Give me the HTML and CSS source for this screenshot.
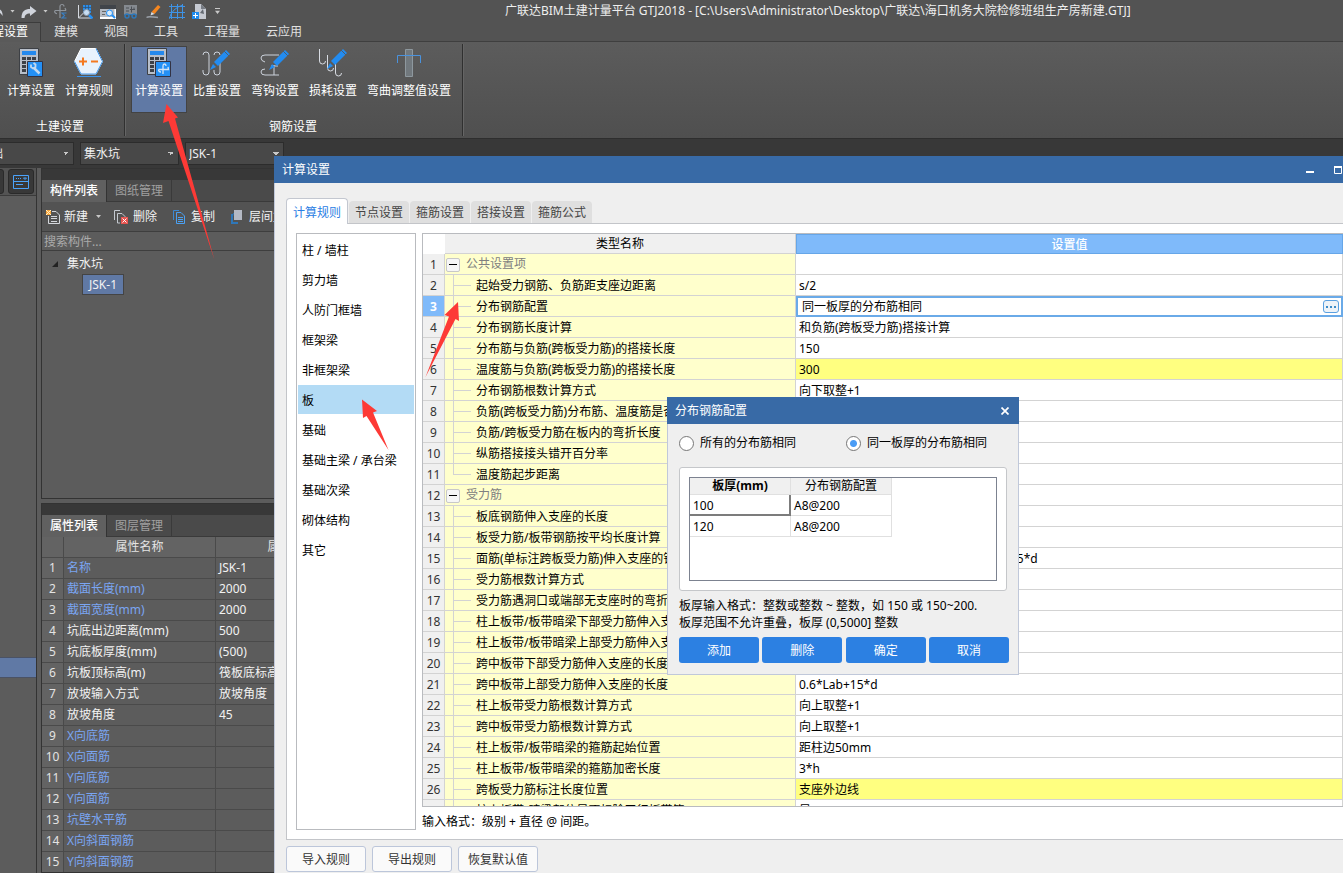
FILE: index.html
```html
<!DOCTYPE html>
<html lang="zh-CN">
<head>
<meta charset="utf-8">
<title>广联达BIM土建计量平台 GTJ2018</title>
<link rel="stylesheet" href="styles.css">
</head>
<body>
<div class="app">
  <header class="titlebar">
    <div class="quick">
      <button class="qbtn qbtn-undo" aria-label="撤销"><svg width="16" height="16" viewBox="0 0 16 16"><path d="M3 7 L8 3 V5.500 C13 5.500 15 9 14.500 13 C13 10 11.500 9 8 9 V11.500 Z" fill="#d0d4dc"/></svg></button>
      <i class="caret"></i>
      <button class="qbtn" aria-label="重做"><svg width="16" height="16" viewBox="0 0 16 16"><path d="M15.500 8L9 3v3C4 6 .5 8 .5 15h3C4 12 5 10.500 9 10.500V13z" fill="#d0d4dc"/></svg></button>
      <i class="caret"></i>
      <button class="qbtn" aria-label="钢筋"><svg width="16" height="16" viewBox="0 0 16 16" fill="none" stroke="#8f959c" stroke-width="1.200"><path d="M6 15V3.500a2 2 0 0 1 4 0M1 7.500h11M1 7.500a2 2 0 0 0 2 3M12 7.500l-1-2.500"/><path d="M12.500 10H8l2.500 2.500L8 15h4.500" stroke="#3a80c4"/></svg></button>
      <button class="qbtn" aria-label="查看钢筋"><svg width="16" height="16" viewBox="0 0 16 16"><path d="M1.500 2v13H14" fill="none" stroke="#d5d9df"/><path d="M1.500 15l5-5" stroke="#d5d9df"/><path d="M6 2h8v8H6z" fill="#2b8de8"/><path d="M8.500 2v8M11.500 2v8M6 4.500h8M6 7.500h8" stroke="#2f4f70" stroke-width=".7"/><circle cx="9.500" cy="9.500" r="3" fill="#c7ddf2" stroke="#8e9aa8"/><path d="M12 12l3.500 3.500" stroke="#2490f5" stroke-width="2.500"/></svg></button>
      <button class="qbtn" aria-label="查找"><svg width="16" height="16" viewBox="0 0 16 16"><path d="M0 2h16v14H0z" fill="#b5bac2"/><path d="M0 2h16v4H0z" fill="#40444a"/><path d="M2 8.500h4M2 11.500h3" stroke="#666"/><path d="M0 15h16M15.500 6v10" stroke="#fff" stroke-width="2"/><circle cx="9.500" cy="10" r="3" fill="#d9ebfa" stroke="#2490f5"/><path d="M12 12l3 3" stroke="#2490f5" stroke-width="2"/></svg></button>
      <button class="qbtn" aria-label="查看三维"><svg width="16" height="16" viewBox="0 0 16 16"><path d="M1 2h13v10H1z" fill="#858a90"/><path d="M3 5h3M3 8h3M8.500 3.500v6M7 6.500h5M11 4.500v2" stroke="#4b4f55" fill="none"/><circle cx="4" cy="13" r="2" fill="#555" stroke="#2f78b9" stroke-width="1.500"/><circle cx="11" cy="13" r="2" fill="#555" stroke="#2f78b9" stroke-width="1.500"/><path d="M1.500 11.500h12" stroke="#2f78b9"/></svg></button>
      <button class="qbtn" aria-label="画笔"><svg width="16" height="16" viewBox="0 0 16 16"><path d="M5.500 9l6.500-7 2.500 2-6 7z" fill="#f5861f"/><path d="M5.500 9l3 2-4 1.500z" fill="#d9dde2"/><path d="M.5 14.500c2-1.500 5-.5 11.500 0" fill="none" stroke="#9aa0a8" stroke-width="1.500"/></svg></button>
      <button class="qbtn" aria-label="网格"><svg width="16" height="16" viewBox="0 0 16 16" fill="none" stroke="#3e93e6"><path d="M2.500 1v15M8.500 1v15M13.500 1v15M0 3.500h16M0 9.500h16M0 14.500h16M0 16Q3 5 14 2"/></svg></button>
      <button class="qbtn" aria-label="新建文件"><svg width="16" height="16" viewBox="0 0 16 16"><path d="M3 1h6l5 5v10H3z" fill="#c6cad2"/><path d="M9 1v5h5" fill="#777c84"/><path d="M8 10l3-4 1 5z" fill="#646a72"/><path d="M0 9h7v7H0z" fill="#1f8cf0"/><path d="M3.500 10v5M1 12.500h5" stroke="#fff"/></svg></button>
      <i class="caret caret-line"></i>
    </div>
    <h1 class="app-title">广联达BIM土建计量平台 GTJ2018 - [C:\Users\Administrator\Desktop\广联达\海口机务大院检修班组生产房新建.GTJ]</h1>
  </header>

  <nav class="ribbon-tabs">
    <button class="rtab rtab-on">工程设置</button><button class="rtab">建模</button><button class="rtab">视图</button><button class="rtab">工具</button><button class="rtab">工程量</button><button class="rtab">云应用</button>
  </nav>

  <section class="ribbon">
    <div class="group">
      <div class="group-btns">
        <button class="rbtn"><svg width="32" height="32" viewBox="0 0 32 32"><path d="M4.500 1.500h19v26h-19z" fill="#b8bfca" stroke="#3d4045"/><path d="M7 4h14v4H7z" fill="#2489ee"/><path d="M7 10h4v3H7zM12 10h4v3h-4zM17 10h4v3h-4zM7 14h4v3H7zM7 18h4v3H7zM7 22h4v3H7z" fill="#3c4047"/><path d="M12.500 14.500h15v15h-15z" fill="#2490f5" stroke="#334"/><path d="M18.500 20.500l6 6" stroke="#c4d8ee" stroke-width="2.500"/><path d="M16 17.500v2.500l2 1.500 2.500-1.500v-2.500l-2-1.500" fill="none" stroke="#c4d8ee" stroke-width="1.800"/></svg><span>计算设置</span></button>
        <button class="rbtn"><svg width="32" height="32" viewBox="0 0 32 32"><path d="M8 1.500h15l6.500 13L23 27H8L1.500 14.500z" fill="#e8f2fd" stroke="#fff"/><path d="M23 1.500l6.500 13L23 27H8L1.500 14.500" fill="none" stroke="#3c93ea"/><path d="M6 14.500h8M10 10.500v8M18 14.500h7" stroke="#f47920" stroke-width="2"/><path d="M4 29.500h24" stroke="#3c93ea"/></svg><span>计算规则</span></button>
      </div>
      <div class="group-name">土建设置</div>
    </div>
    <div class="group group-steel">
      <div class="group-btns">
        <button class="rbtn rbtn-on"><svg width="32" height="32" viewBox="0 0 32 32"><path d="M4.500 1.500h19v26h-19z" fill="#b8bfca" stroke="#3d4045"/><path d="M7 4h14v4H7z" fill="#2489ee"/><path d="M7 10h4v3H7zM12 10h4v3h-4zM17 10h4v3h-4zM7 14h4v3H7zM7 18h4v3H7zM7 22h4v3H7z" fill="#3c4047"/><path d="M12.500 14.500h15v15h-15z" fill="#2490f5" stroke="#334"/><path d="M20 27v-8q0-2 1.500-2t1.500 2M15.500 22.500h10l-.5-2.500M15.500 22.500q0 2.500 2.500 2.500" fill="none" stroke="#d5e4f5" stroke-width="1.300"/></svg><span>计算设置</span></button>
        <button class="rbtn"><svg width="32" height="32" viewBox="0 0 32 32" fill="none"><path d="M2 8q0-3 3-3t3 3v17q0 3-3 3t-3-3v-2M13 8q0-3 3-3t3 3M19 12v13q0 3-3 3t-3-3v-2" stroke="#ccd2db"/><path d="M13 15L25 3l4 4-12 12z" fill="#238cf0"/><path d="M12 17l-3 6 6-3z" fill="#238cf0"/><path d="M23 4l5 5" stroke="#4c5c6e"/></svg><span>比重设置</span></button>
        <button class="rbtn"><svg width="32" height="32" viewBox="0 0 32 32" fill="none"><path d="M6 15q-4-1-4-4t4-3h14M6 22q-4 0-4 3t4 3h14M15 18v10M12 19h7" stroke="#ccd2db"/><path d="M14 15L26 3l4 4-12 12z" fill="#238cf0"/><path d="M13 17l-3 6 6-3z" fill="#238cf0"/><path d="M24 4l5 5" stroke="#4c5c6e"/></svg><span>弯钩设置</span></button>
        <button class="rbtn"><svg width="32" height="32" viewBox="0 0 32 32" fill="none"><path d="M2.500 2v12q0 3 3 3t3-3M10.500 8v13q0 3 3 3t3-3M18.500 15v11q0 3 3 3t3-3" stroke="#d8dce3"/><path d="M14 14L26 2l4 4-12 12z" fill="#238cf0"/><path d="M13 16l-3 6 6-3z" fill="#238cf0"/><path d="M24 3l5 5" stroke="#4c5c6e"/></svg><span>损耗设置</span></button>
        <button class="rbtn rbtn-wide"><svg width="32" height="32" viewBox="0 0 32 32" fill="none"><path d="M12.500 2.500h7v27h-7z" fill="#71787d" stroke="#8e989e"/><path d="M4.500 16V8.500h23V16" stroke="#4a92dd"/></svg><span>弯曲调整值设置</span></button>
      </div>
      <div class="group-name">钢筋设置</div>
    </div>
  </section>

  <div class="selectbar">
    <select aria-label="楼层"><option>基础</option></select>
    <select aria-label="构件类型"><option>集水坑</option></select>
    <select aria-label="构件"><option>JSK-1</option></select>
  </div>

  <div class="workspace">
    <aside class="strip">
      <div class="strip-tools">
        <button class="sbtn" aria-label="列表"></button>
        <button class="sbtn" aria-label="面板"><svg width="16" height="14" viewBox="0 0 16 14" fill="none" stroke="#4ba3fa"><path d="M.5.500h15v13H.500zM.500 6.500h15M3 9.500h7" /><path d="M3 3.500h1M5 3.500h1M7 3.500h1M10.500 3h3l-1.500 1.500z"/></svg></button>
      </div>
      <div class="strip-mark"></div>
    </aside>

    <main class="panels">
      <section class="panel panel-list">
        <div class="panel-cap"></div>
        <div class="ptabs"><button class="ptab ptab-on">构件列表</button><button class="ptab">图纸管理</button></div>
        <div class="ptools">
          <button class="ptool"><svg width="15" height="16" viewBox="0 0 15 16" fill="none"><path d="M6 2.500h4l3.500 3.500v8.500h-11V7" stroke="#d4d7dc"/><path d="M5 7.500h6M5 9.500h6M5 12.500h6" stroke="#d4d7dc"/><path d="M0 1h5v5H0z" fill="#f8a63c"/><path d="M0 1l5 5M5 1L0 6" stroke="#fff0c8"/></svg>新建<i class="caret"></i></button>
          <button class="ptool ptool-del"><svg width="16" height="16" viewBox="0 0 16 16" fill="none"><path d="M1.500 11V1.500H7M4.500 14V4.500H9l3 3V8M4.500 14H7" stroke="#c4c9d0"/><path d="M8 8h7v7H8z" fill="#e6534f"/><path d="M9.500 9.500l4 4M13.500 9.500l-4 4" stroke="#fff"/></svg>删除</button>
          <button class="ptool ptool-copy"><svg width="16" height="16" viewBox="0 0 16 16" fill="none"><path d="M1.500 11V1.500H7" stroke="#3b87d2"/><path d="M4.500 3.500H9l3.500 3.500v7.500h-8z" stroke="#4aa0f2"/><path d="M6 8.500h5M6 10.500h5M6 12.500h5" stroke="#4aa0f2"/></svg>复制</button>
          <button class="ptool ptool-layer"><svg width="16" height="16" viewBox="0 0 16 16"><path d="M1 5h2v8h5v2H1zM3 4h2v7" fill="#2f77b8"/><path d="M4 1h8v10H4z" fill="#b4b9c4"/></svg>层间复制</button>
        </div>
        <input class="search" type="text" placeholder="搜索构件..." aria-label="搜索构件">
        <div class="tree">
          <div class="tree-root"><i class="tri"></i>集水坑</div>
          <button class="tree-item">JSK-1</button>
        </div>
      </section>
      <section class="panel panel-props">
        <div class="panel-cap"></div>
        <div class="ptabs"><button class="ptab ptab-on">属性列表</button><button class="ptab">图层管理</button></div>
        <table class="props">
          <colgroup><col class="pc-no"><col class="pc-name"><col></colgroup>
          <thead><tr><th></th><th>属性名称</th><th>属性值</th></tr></thead>
          <tbody>
            <tr class="key"><th>1</th><td>名称</td><td>JSK-1</td></tr>
            <tr class="key"><th>2</th><td>截面长度(mm)</td><td>2000</td></tr>
            <tr class="key"><th>3</th><td>截面宽度(mm)</td><td>2000</td></tr>
            <tr><th>4</th><td>坑底出边距离(mm)</td><td>500</td></tr>
            <tr><th>5</th><td>坑底板厚度(mm)</td><td>(500)</td></tr>
            <tr><th>6</th><td>坑板顶标高(m)</td><td>筏板底标高</td></tr>
            <tr><th>7</th><td>放坡输入方式</td><td>放坡角度</td></tr>
            <tr><th>8</th><td>放坡角度</td><td>45</td></tr>
            <tr class="key"><th>9</th><td>X向底筋</td><td></td></tr>
            <tr class="key"><th>10</th><td>X向面筋</td><td></td></tr>
            <tr class="key"><th>11</th><td>Y向底筋</td><td></td></tr>
            <tr class="key"><th>12</th><td>Y向面筋</td><td></td></tr>
            <tr class="key"><th>13</th><td>坑壁水平筋</td><td></td></tr>
            <tr class="key"><th>14</th><td>X向斜面钢筋</td><td></td></tr>
            <tr class="key"><th>15</th><td>Y向斜面钢筋</td><td></td></tr>
            <tr><th></th><td></td><td></td></tr>
          </tbody>
        </table>
      </section>
    </main>
  </div>

  <section class="dialog" role="dialog" aria-label="计算设置">
    <header class="dlg-title"><h2>计算设置</h2>
      <button class="wbtn" aria-label="最小化"><svg width="8" height="8" viewBox="0 0 8 8"><path d="M0 5h8v2H0z" fill="#fff"/></svg></button>
      <button class="wbtn" aria-label="最大化"><svg width="8" height="8" viewBox="0 0 8 8"><path d="M.5 1v6.500h7V1" fill="none" stroke="#fff"/><path d="M0 0h8v2H0z" fill="#fff"/></svg></button>
    </header>
    <div class="dlg-body">
      <div class="dtabs"><button class="dtab dtab-on">计算规则</button><button class="dtab">节点设置</button><button class="dtab">箍筋设置</button><button class="dtab">搭接设置</button><button class="dtab">箍筋公式</button></div>
      <div class="sheet">
        <ul class="cats">
          <li>柱 / 墙柱</li><li>剪力墙</li><li>人防门框墙</li><li>框架梁</li><li>非框架梁</li><li class="cat-on">板</li><li>基础</li><li>基础主梁 / 承台梁</li><li>基础次梁</li><li>砌体结构</li><li>其它</li>
        </ul>
        <div class="rules">
          <div class="grid-box">
            <table class="grid">
              <colgroup><col class="gc-no"><col class="gc-name"><col></colgroup>
              <thead><tr><th class="corner"></th><th>类型名称</th><th class="col-on">设置值</th></tr></thead>
              <tbody>
                <tr class="head"><th>1</th><td><button class="fold" aria-label="折叠"></button>公共设置项</td><td></td></tr>
                <tr><th>2</th><td>起始受力钢筋、负筋距支座边距离</td><td>s/2</td></tr>
                <tr class="row-on"><th>3</th><td>分布钢筋配置</td><td><div class="edit"><input type="text" value="同一板厚的分布筋相同" aria-label="分布钢筋配置"><button class="more" aria-label="更多"><i></i><i></i><i></i></button></div></td></tr>
                <tr><th>4</th><td>分布钢筋长度计算</td><td>和负筋(跨板受力筋)搭接计算</td></tr>
                <tr><th>5</th><td>分布筋与负筋(跨板受力筋)的搭接长度</td><td>150</td></tr>
                <tr><th>6</th><td>温度筋与负筋(跨板受力筋)的搭接长度</td><td class="changed">300</td></tr>
                <tr><th>7</th><td>分布钢筋根数计算方式</td><td>向下取整+1</td></tr>
                <tr><th>8</th><td>负筋(跨板受力筋)分布筋、温度筋是否带弯勾</td><td></td></tr>
                <tr><th>9</th><td>负筋/跨板受力筋在板内的弯折长度</td><td></td></tr>
                <tr><th>10</th><td>纵筋搭接接头错开百分率</td><td></td></tr>
                <tr class="last"><th>11</th><td>温度筋起步距离</td><td></td></tr>
                <tr class="head"><th>12</th><td><button class="fold" aria-label="折叠"></button>受力筋</td><td></td></tr>
                <tr><th>13</th><td>板底钢筋伸入支座的长度</td><td></td></tr>
                <tr><th>14</th><td>板受力筋/板带钢筋按平均长度计算</td><td></td></tr>
                <tr><th>15</th><td>面筋(单标注跨板受力筋)伸入支座的锚固长度</td><td>能直锚就直锚,否则按公式计算: ha-bhc+15*d</td></tr>
                <tr><th>16</th><td>受力筋根数计算方式</td><td></td></tr>
                <tr><th>17</th><td>受力筋遇洞口或端部无支座时的弯折长度</td><td></td></tr>
                <tr><th>18</th><td>柱上板带/板带暗梁下部受力筋伸入支座的长度</td><td></td></tr>
                <tr><th>19</th><td>柱上板带/板带暗梁上部受力筋伸入支座的长度</td><td></td></tr>
                <tr><th>20</th><td>跨中板带下部受力筋伸入支座的长度</td><td></td></tr>
                <tr><th>21</th><td>跨中板带上部受力筋伸入支座的长度</td><td>0.6*Lab+15*d</td></tr>
                <tr><th>22</th><td>柱上板带受力筋根数计算方式</td><td>向上取整+1</td></tr>
                <tr><th>23</th><td>跨中板带受力筋根数计算方式</td><td>向上取整+1</td></tr>
                <tr><th>24</th><td>柱上板带/板带暗梁的箍筋起始位置</td><td>距柱边50mm</td></tr>
                <tr><th>25</th><td>柱上板带/板带暗梁的箍筋加密长度</td><td>3*h</td></tr>
                <tr><th>26</th><td>跨板受力筋标注长度位置</td><td class="changed">支座外边线</td></tr>
                <tr><th></th><td>柱上板带/暗梁部位是否扣除平行板带筋</td><td>是</td></tr>
              </tbody>
            </table>
          </div>
          <p class="hint">输入格式：级别 + 直径 @ 间距。</p>
        </div>
      </div>
      <div class="dlg-btns"><button>导入规则</button><button>导出规则</button><button>恢复默认值</button></div>
    </div>
  </section>

  <section class="popup" role="dialog" aria-label="分布钢筋配置">
    <header class="pop-title"><h2>分布钢筋配置</h2><button class="wbtn" aria-label="关闭"><svg width="8" height="8" viewBox="0 0 8 8"><path d="M.5.500l7 7M7.500.500l-7 7" stroke="#fff" stroke-width="1.700"/></svg></button></header>
    <div class="pop-body">
      <div class="radios">
        <label><input type="radio" name="mode">所有的分布筋相同</label>
        <label><input type="radio" name="mode" checked>同一板厚的分布筋相同</label>
      </div>
      <div class="pop-frame">
        <div class="mini-box">
          <table class="mini">
            <thead><tr><th class="strong">板厚(mm)</th><th>分布钢筋配置</th></tr></thead>
            <tbody><tr><td class="cur">100</td><td>A8@200</td></tr><tr><td>120</td><td>A8@200</td></tr></tbody>
          </table>
        </div>
      </div>
      <p class="pop-hint">板厚输入格式：整数或整数 ~ 整数，如 150 或 150~200.<br>板厚范围不允许重叠，板厚 (0,5000] 整数</p>
      <div class="pop-btns"><button>添加</button><button>删除</button><button>确定</button><button>取消</button></div>
    </div>
  </section>

  <svg class="marks" width="480" height="460" viewBox="0 0 480 460" fill="#fd3a36" aria-hidden="true">
    <path d="M166.500 104L163 123l5.500-2L214.500 260 175 118.500l3-1z"/>
    <path d="M458 302L444.500 315l4.500 1.500L425.500 377 455.500 319l3.500 2z"/>
    <path d="M362 399.500L377 411l-4 1.500L388.500 450 366.500 416l-3.500 2z"/>
  </svg>
</div>
</body>
</html>
```

FILE: styles.css
```css
* { box-sizing: border-box; }
body {
  margin: 0;
  font: 12px/18px "Noto Sans", "Noto Sans CJK SC", sans-serif;
  color: #000;
  background: #383838;
}
button, input, select { font: inherit; color: inherit; margin: 0; }
button { padding: 0; border: 0; background: none; white-space: nowrap; }
h1, h2, p, ul { margin: 0; padding: 0; font-size: 12px; font-weight: 400; }
table { border-collapse: separate; border-spacing: 0; table-layout: fixed; }
svg { display: block; flex: none; }

.app {
  position: relative;
  display: flex;
  flex-direction: column;
  height: 100vh;
  overflow: hidden;
}

/* title bar */
.titlebar { display: flex; align-items: center; height: 22px; background: #535353; color: #e8e8e8; }
.quick { display: flex; align-items: center; gap: 5px; flex: none; width: 505px; height: 20px; }
.qbtn { flex: none; width: 16px; }
.qbtn + .qbtn { margin-left: 2px; }
.qbtn-undo { margin-left: -12px; }
.caret { flex: none; width: 5px; height: 3px; margin: 0 1px; background: #c8c8c8; clip-path: polygon(0 0, 100% 0, 50% 100%); }
.quick .caret-line { margin-left: 2px; height: 6px; clip-path: polygon(0 0, 100% 0, 100% 15%, 0 15%, 0 45%, 100% 45%, 50% 100%, 0 45%); }
.app-title { white-space: nowrap; color: #efefef; }

/* ribbon */
.ribbon-tabs { display: flex; height: 20px; background: #535353; border-bottom: 1px solid #3f3f3f; color: #e0e0e0; }
.rtab { padding: 0 13px; }
.rtab-on { display: flex; justify-content: flex-end; width: 41px; height: 20px; padding-right: 12px; background: #5a5a5a; border: solid #3c3c3c; border-width: 1px 1px 0 0; color: #fff; }
.ribbon { display: flex; height: 97px; background: linear-gradient(#5c5c5c, #4f4f4f); border-bottom: 1px solid #2e2e2e; color: #fff; }
.group { display: flex; flex-direction: column; justify-content: space-between; margin: 2px 0; padding: 2px 6px 0 2px; border-right: 1px solid #303030; box-shadow: 1px 0 #656565; }
.group-steel { padding-left: 5px; }
.group-btns { display: flex; }
.rbtn { display: flex; flex-direction: column; align-items: center; width: 58px; height: 67px; border: 1px solid transparent; }
.rbtn span { margin-top: 3px; }
.rbtn-wide { width: 94px; }
.rbtn-on { width: 56px; margin: 0 1px; background: #6079a5; border-color: #434343; }
.group-name { text-align: center; }

.selectbar { display: flex; gap: 6px; height: 29px; padding: 3px 0; margin-left: -25px; background: #383838; }
.selectbar select {
  appearance: none;
  width: 99px;
  height: 23px;
  padding: 0 3px;
  border: 1px solid #2c2c2c;
  border-radius: 0;
  color: #f0f0f0;
  background: linear-gradient(45deg, transparent 50%, #c8c8c8 50%) right 7px center / 3px 3px no-repeat,
              linear-gradient(-45deg, transparent 50%, #c8c8c8 50%) right 4px center / 3px 3px no-repeat, #484848;
}

/* workspace */
.workspace { display: flex; flex: 1; min-height: 0; color: #f2f2f2; }
.strip { display: flex; flex-direction: column; flex: none; width: 37px; background: #5c5c5c; border-right: 1px solid #333; }
.strip-tools { display: flex; gap: 4px; height: 28px; padding: 1px 0 2px; margin-left: -22px; border-bottom: 1px solid #3b3b3b; background: #545454; }
.sbtn { display: grid; place-items: center; width: 26px; height: 25px; background: #383838; border: 1px solid #2a2a2a; border-radius: 3px; }
.strip-mark { margin-top: 461px; height: 21px; background: #6079a5; border-top: 1px solid #4a5265; border-bottom: 1px solid #4a5265; }
.panels { display: flex; flex-direction: column; gap: 4px; width: 320px; padding-left: 4px; background: #5c5c5c; }
.panel { display: flex; flex-direction: column; border: 1px solid #333; background: #5c5c5c; }
.panel-list { flex: none; height: 331px; }
.panel-props { flex: 1; min-height: 0; overflow: hidden; }
.panel-cap { flex: none; height: 11px; background: #383838; }
.ptabs { display: flex; flex: none; height: 22px; background: #4a4a4a; border-bottom: 1px solid #3a3a3a; }
.ptab { width: 65px; height: 21px; border-right: 1px solid #3a3a3a; color: #a0a0a0; }
.ptab-on { height: 22px; background: #606060; color: #fff; font-weight: 500; border-right-color: #333; }
.ptools { display: flex; flex: none; height: 30px; padding-left: 4px; background: #535353; border-bottom: 1px solid #3e3e3e; overflow: hidden; }
.ptool { display: flex; align-items: center; gap: 3px; flex: none; }
.ptool .caret { margin-left: 5px; }
.ptool-del { margin-left: 11px; gap: 4px; }
.ptool-copy { margin-left: 15px; }
.ptool-layer { margin-left: 15px; }
.search { flex: none; height: 19px; padding: 0 2px; border: 0; border-bottom: 1px solid #3e3e3e; border-radius: 0; background: #5c5c5c; }
.search::placeholder { color: #aaa; opacity: 1; }
.tree { padding: 3px 0 0 10px; }
.tree-root { display: flex; align-items: center; gap: 9px; height: 20px; }
.tri { width: 6px; height: 6px; background: #222; clip-path: polygon(100% 0, 100% 100%, 0 100%); }
.tree-item { margin-left: 30px; width: 42px; height: 21px; background: #6079a5; border: 1px solid #444; }

.props { width: 100%; color: #f2f2f2; }
.pc-no { width: 22px; }
.pc-name { width: 152px; }
.props th, .props td { height: 21px; padding: 0 3px; border: solid #4a4a4a; border-width: 0 1px 1px 0; line-height: 20px; font-weight: 400; text-align: left; white-space: nowrap; }
.props th { padding: 0; text-align: center; background: #636363; color: #e4e4e4; }
.key td:nth-child(2) { color: #7aa5f2; }

/* settings window */
.dialog { position: absolute; left: 274px; top: 156px; right: 0; bottom: 0; display: flex; flex-direction: column; background: #efefef; border-left: 1px solid #c0c8da; }
.dlg-title, .pop-title { display: flex; align-items: center; flex: none; height: 27px; padding-left: 8px; margin-left: -1px; background: #386aa6; color: #fff; }
.dlg-title h2, .pop-title h2 { flex: 1; }
.wbtn { width: 28px; height: 20px; display: grid; place-items: center end; }
.dlg-title .wbtn:last-child { margin-right: 1px; }
.dlg-body { display: flex; flex-direction: column; flex: 1; min-height: 0; padding: 15px 0 1px 11px; }
.dtabs { display: flex; align-items: flex-end; gap: 1px; height: 26px; margin-bottom: -1px; z-index: 1; }
.dtab { width: 60px; height: 22px; padding-top: 2px; margin-bottom: 1px; border-radius: 4px 4px 0 0; background: #dfdfdf; color: #444; }
.dtab-on { width: 62px; height: 26px; margin-bottom: 0; background: #fff; border: 1px solid #c3c7d0; border-bottom: 0; color: #2b80e4; }
.sheet { display: flex; flex: 1; min-height: 0; gap: 6px; padding: 9px 0 9px 9px; background: #fff; border: 1px solid #c3c5c9; border-right: 0; }
.cats { width: 120px; padding: 1px; border: 1px solid #b9bbbf; list-style: none; }
.cats li { height: 30px; padding: 2px 0 0 4px; line-height: 28px; }
.cats .cat-on { height: 29px; margin-bottom: 1px; background: #b3dbf5; }
.rules { display: flex; flex-direction: column; flex: 1; min-width: 0; }
.grid-box { flex: 1; min-height: 0; overflow: hidden; border: 1px solid #b9bbbf; border-right: 0; }
.grid { width: 100%; }
.gc-no { width: 22px; }
.gc-name { width: 351px; }
.grid th, .grid td { height: 21px; padding: 2px 3px 0; border: solid #d3d3d3; border-width: 0 1px 1px 0; line-height: 18px; font-weight: 400; text-align: left; white-space: nowrap; }
.grid thead th { height: 20px; padding-top: 1px; text-align: center; background: #f0f0f0; }
.grid thead .corner { background: #fff; border-color: #fff; }
.grid thead .col-on { background: #7fbafa; border: 1px solid #66a6e8; color: #fff; font-weight: 500; line-height: 17px; }
.grid tbody th { padding: 2px 0 0; text-align: center; background: #f0f0f0; color: #333; }
.grid td:nth-child(2) {
  padding-left: 31px;
  background: linear-gradient(#d3d3d3, #d3d3d3) 8px 0 / 1px 100% no-repeat,
              linear-gradient(#d3d3d3, #d3d3d3) 8px 10px / 18px 1px no-repeat, #ffffcc;
}
.grid .last td:nth-child(2) { background-size: 1px 10px, 18px 1px; }
.grid .head td:nth-child(2) { padding: 0 0 0 1px; line-height: 20px; background: #ffffcc; color: #808080; }
.grid .row-on th { background: #7fbafa; color: #fff; font-weight: 700; }
.grid .row-on td:last-child { padding: 0; border: 0; }
.grid .changed { background: #ffff80; }
.fold { display: inline-block; vertical-align: middle; width: 14px; height: 14px; margin-right: 6px; border: 1px solid #c8c8c8; border-radius: 2px; background: linear-gradient(#000, #000) center / 8px 1px no-repeat, #f6f6f6; }
.edit { display: flex; align-items: center; height: 21px; padding-right: 2px; border: 2px solid #6aaae8; background: #fff; }
.edit input { flex: 1; min-width: 0; height: 17px; padding: 0 4px; border: 0; outline: 0; background: none; }
.more { display: flex; align-items: center; justify-content: center; gap: 2px; width: 16px; height: 13px; border: 1px solid #5aa0e0; border-radius: 3px; background: #eef3f8; }
.more i { width: 2px; height: 2px; background: #3d8cc8; }
.hint { height: 23px; padding-top: 6px; white-space: pre; }
.dlg-btns { display: flex; flex: none; gap: 6px; padding-top: 6px; }
.dlg-btns button { width: 80px; height: 26px; padding-top: 1px; border: 1px solid #bcc6da; border-radius: 3px; background: #fafafa; color: #333; }

/* distribution bar window */
.popup { position: absolute; left: 667px; top: 397px; width: 352px; background: #efefef; border: 1px solid #c0c8da; border-top: 0; }
.pop-title { margin-right: -1px; padding-right: 10px; }
.pop-body { padding: 10px 9px 11px 11px; }
.radios { display: flex; height: 18px; }
.radios label { display: flex; align-items: center; gap: 6px; flex: none; width: 167px; }
.radios input { appearance: none; flex: none; width: 15px; height: 15px; border: 1px solid #777; border-radius: 50%; background: #fff; }
.radios label:last-child { width: auto; }
.radios input:checked { background: radial-gradient(circle, #4a9cf5 3px, #fff 4px); }
.pop-frame { margin: 15px 2px 0 0; padding: 9px; border: 1px solid #c5c7ca; border-radius: 3px; background: #fff; }
.mini-box { height: 104px; border: 1px solid #7c8290; }
.mini { width: 202px; }
.mini th, .mini td { height: 21px; padding: 2px 3px 0; border: solid #e0e0e0; border-width: 0 1px 1px 0; line-height: 18px; font-weight: 400; text-align: left; }
.mini th { height: 17px; padding: 0; line-height: 16px; text-align: center; background: #f0f0f0; }
.mini .strong { font-weight: 700; }
.mini .cur { border-color: #7c7c7c; border-width: 0 2px 2px 0; line-height: 17px; }
.pop-hint { padding: 6px 0; line-height: 17px; white-space: nowrap; }
.pop-btns { display: flex; justify-content: space-between; }
.pop-btns button { width: 80px; height: 26px; padding-top: 1px; border-radius: 3px; background: #2c80e2; color: #fff; }

.marks { position: absolute; left: 0; top: 0; pointer-events: none; }
```
